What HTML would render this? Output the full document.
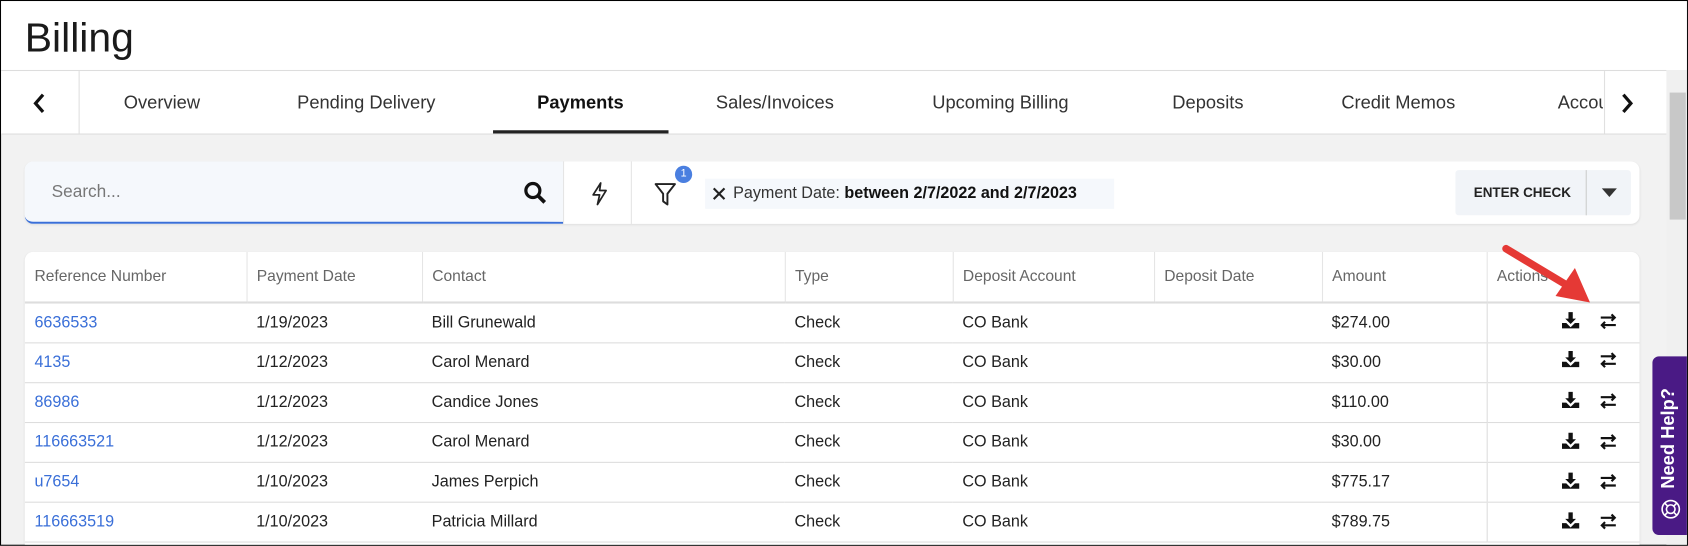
<!DOCTYPE html>
<html><head><style>
*{box-sizing:border-box;margin:0;padding:0}
html,body{width:1688px;height:546px;overflow:hidden;background:#fff}
#w{position:absolute;left:0;top:0;width:1568px;height:507px;transform:scale(1.0765);transform-origin:0 0;background:#f2f2f2;font-family:"Liberation Sans",sans-serif;color:#222;border:1px solid #000;overflow:hidden}
.top{position:absolute;left:0;top:0;width:1568px;height:64px;background:#fff}
.top h1{position:absolute;left:22px;top:14px;font-weight:400;font-size:38px;color:#1a1a1a}
.tabs{position:absolute;left:0;top:64px;width:1547px;height:60px;background:#fff;border-top:1px solid #ddd;border-bottom:1px solid #ddd}
.tab{position:absolute;top:20px;font-size:17px;color:#333}
.sb{position:absolute;left:1547px;top:64px;width:21px;height:443px;background:#f0f0f0}
.card{position:absolute;background:#fff;border-radius:8px;box-shadow:0 1px 2px rgba(0,0,0,.08)}
table{border-collapse:collapse;width:100%;font-size:15px}
td,th{height:37px;padding-left:9px;text-align:left;font-weight:400;border-bottom:1px solid #ddd;color:#222}
th{height:47px;color:#666;font-size:14.5px;border-right:1px solid #e5e5e5;border-bottom:2px solid #ddd}
th:last-child{border-right:none}
td.a{color:#3a6fd8}
td.ac{border-left:1px solid #ddd;color:transparent}
.help{position:absolute;left:1534px;top:330px;width:34px;height:166px;background:#4a1a85;border-radius:6px 0 0 6px}
</style></head><body><div id="w">
<div class="top"><h1>Billing</h1></div>
<div class="tabs">
<div style="position:absolute;left:72px;top:0;width:1px;height:58px;background:#e0e0e0"></div>
<div style="position:absolute;left:1489px;top:0;width:1px;height:58px;background:#e0e0e0"></div>
<svg style="position:absolute;left:28px;top:20px" width="14" height="20"><path d="M11 2 L4 10 L11 18" stroke="#111" stroke-width="3" fill="none"/></svg>
<svg style="position:absolute;left:1504px;top:20px" width="14" height="20"><path d="M3 2 L10 10 L3 18" stroke="#111" stroke-width="3" fill="none"/></svg>
<span class="tab" style="left:114px">Overview</span>
<span class="tab" style="left:275px">Pending Delivery</span>
<span class="tab" style="left:498px;font-weight:700;color:#111">Payments</span>
<div style="position:absolute;left:457px;top:55px;width:163px;height:3px;background:#222"></div>
<span class="tab" style="left:664px">Sales/Invoices</span>
<span class="tab" style="left:865px">Upcoming Billing</span>
<span class="tab" style="left:1088px">Deposits</span>
<span class="tab" style="left:1245px">Credit Memos</span>
<span class="tab" style="left:1446px;width:42px;overflow:hidden;white-space:nowrap">Accounts</span>
</div>
<div class="sb"><div style="position:absolute;left:3px;top:21px;width:15px;height:118px;background:#c8c8c8"></div></div>

<div class="card" style="left:22px;top:149px;width:1500px;height:58px">
<div style="position:absolute;left:0;top:0;width:500px;height:58px;background:#f5f8fc;border-bottom:2px solid #3a6fd8;border-radius:8px 0 0 8px"></div>
<span style="position:absolute;left:25px;top:20px;font-size:16px;color:#777">Search...</span>
<svg style="position:absolute;left:463px;top:18px" width="22" height="22"><circle cx="9" cy="9" r="6.5" stroke="#111" stroke-width="3" fill="none"/><path d="M14 14 L20 20" stroke="#111" stroke-width="3.5"/></svg>
<div style="position:absolute;left:500px;top:0;width:1px;height:58px;background:#e5e5e5"></div>
<svg style="position:absolute;left:524px;top:18px" width="20" height="24"><path d="M11 2 L4 13 H10 L8 22 L16 9 H10 Z" stroke="#222" stroke-width="1.6" fill="none" stroke-linejoin="round"/></svg>
<div style="position:absolute;left:563px;top:0;width:1px;height:58px;background:#e5e5e5"></div>
<svg style="position:absolute;left:584px;top:18px" width="24" height="26"><path d="M2 3 H20 L13 12 V22 L9 19 V12 Z" stroke="#222" stroke-width="1.8" fill="none" stroke-linejoin="round"/></svg>
<div style="position:absolute;left:604px;top:4px;width:16px;height:16px;border-radius:50%;background:#4a7fe0;color:#fff;font-size:10px;text-align:center;line-height:16px">1</div>
<div style="position:absolute;left:632px;top:16px;width:380px;height:28px;background:#f5f8fc"></div>
<svg style="position:absolute;left:638px;top:23px" width="14" height="14"><path d="M2 2 L12 12 M12 2 L2 12" stroke="#222" stroke-width="2"/></svg>
<span style="position:absolute;left:658px;top:21px;font-size:15px;color:#333">Payment Date: <b style="color:#111">between 2/7/2022 and 2/7/2023</b></span>
<div style="position:absolute;left:1329px;top:8px;width:163px;height:42px;background:#f1f4f8;border-radius:3px"></div>
<span style="position:absolute;left:1346px;top:22px;font-size:12.5px;font-weight:700;color:#222">ENTER CHECK</span>
<div style="position:absolute;left:1450px;top:8px;width:1px;height:42px;background:#ccc"></div>
<svg style="position:absolute;left:1464px;top:24px" width="16" height="10"><path d="M1 1 H15 L8 9 Z" fill="#333"/></svg>
</div>

<div class="card" style="left:22px;top:233px;width:1500px;height:280px;overflow:hidden">
<table>
<colgroup><col style="width:206px"><col style="width:163px"><col style="width:337px"><col style="width:156px"><col style="width:187px"><col style="width:156px"><col style="width:153px"><col></colgroup>
<tr><th>Reference Number</th><th>Payment Date</th><th>Contact</th><th>Type</th><th>Deposit Account</th><th>Deposit Date</th><th>Amount</th><th>Actions</th></tr>
<tr><td class="a">6636533</td><td>1/19/2023</td><td>Bill Grunewald</td><td>Check</td><td>CO Bank</td><td></td><td>$274.00</td><td class="ac"></td></tr>
<tr><td class="a">4135</td><td>1/12/2023</td><td>Carol Menard</td><td>Check</td><td>CO Bank</td><td></td><td>$30.00</td><td class="ac"></td></tr>
<tr><td class="a">86986</td><td>1/12/2023</td><td>Candice Jones</td><td>Check</td><td>CO Bank</td><td></td><td>$110.00</td><td class="ac"></td></tr>
<tr><td class="a">116663521</td><td>1/12/2023</td><td>Carol Menard</td><td>Check</td><td>CO Bank</td><td></td><td>$30.00</td><td class="ac"></td></tr>
<tr><td class="a">u7654</td><td>1/10/2023</td><td>James Perpich</td><td>Check</td><td>CO Bank</td><td></td><td>$775.17</td><td class="ac"></td></tr>
<tr><td class="a">116663519</td><td>1/10/2023</td><td>Patricia Millard</td><td>Check</td><td>CO Bank</td><td></td><td>$789.75</td><td class="ac"></td></tr>
</table>
</div>
<svg width="0" height="0" style="position:absolute"><defs>
<g id="dl"><path d="M6 0 H10 V6 H13 L8 11 L3 6 H6 Z" fill="#111"/><path d="M0 10 H4 L8 14 L12 10 H16 V15 H0 Z" fill="#111"/></g>
<g id="sw"><path d="M1 4 H14 M11 1 L14 4 L11 7 M15 11 H2 M5 8 L2 11 L5 14" stroke="#111" stroke-width="2" fill="none"/></g>
</defs></svg>
<svg style="position:absolute;left:0;top:0" width="1568" height="507">
<g transform="translate(1450,289)"><use href="#dl"/></g><g transform="translate(1485,290)"><use href="#sw"/></g>
<g transform="translate(1450,325)"><use href="#dl"/></g><g transform="translate(1485,326)"><use href="#sw"/></g>
<g transform="translate(1450,363)"><use href="#dl"/></g><g transform="translate(1485,364)"><use href="#sw"/></g>
<g transform="translate(1450,401)"><use href="#dl"/></g><g transform="translate(1485,402)"><use href="#sw"/></g>
<g transform="translate(1450,438)"><use href="#dl"/></g><g transform="translate(1485,439)"><use href="#sw"/></g>
<g transform="translate(1450,475)"><use href="#dl"/></g><g transform="translate(1485,476)"><use href="#sw"/></g>
<path d="M1398 230 L1458 266" stroke="#e53935" stroke-width="7" stroke-linecap="round"/>
<path d="M1476 280 L1444 274 L1462 248 Z" fill="#e53935"/>
</svg>
<div class="help">
<div style="position:absolute;left:5px;top:5px;transform-origin:0 0;transform:translate(0,118px) rotate(-90deg);color:#fff;font-weight:700;font-size:17px;white-space:nowrap;width:118px">Need Help?</div>
<svg style="position:absolute;left:7px;top:132px" width="20" height="20"><circle cx="10" cy="10" r="8" stroke="#fff" stroke-width="1.5" fill="none"/><circle cx="10" cy="10" r="4" stroke="#fff" stroke-width="1.5" fill="none"/><path d="M4 4 L7 7 M16 4 L13 7 M4 16 L7 13 M16 16 L13 13" stroke="#fff" stroke-width="1.5"/></svg>
</div>
</div></body></html>
